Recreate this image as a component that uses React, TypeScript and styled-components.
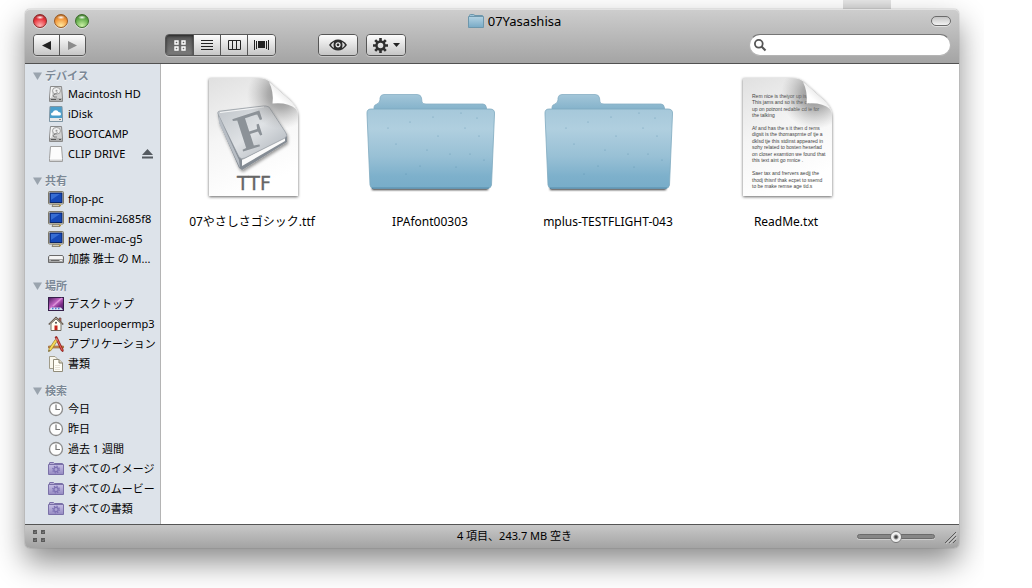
import React from "react";
import styled, { createGlobalStyle, css } from "styled-components";

const GlobalStyle = createGlobalStyle`
  * { box-sizing: border-box; }
  body {
    margin: 0;
    background: #fff;
    color: #000;
    font-family: "Noto Sans", "Noto Sans CJK JP", sans-serif;
    font-size: 11px;
  }
  button, input { font: inherit; color: inherit; }
  svg { display: block; flex: none; overflow: visible; }
`;

/* ---------- window frame ---------- */

const Desktop = styled.main`
  margin-right: 48px;
  padding: 0 25px 40px;
  overflow: hidden;
`;

const BackgroundTab = styled.div`
  width: 48px;
  height: 9px;
  margin: 0 68px 0 auto;
  background: linear-gradient(#e8e8e8, #d6d6d6);
`;

const Window = styled.section`
  position: relative;
  border-radius: 5px;
  box-shadow: 0 0 1px rgba(0, 0, 0, 0.6), 0 14px 30px rgba(0, 0, 0, 0.46);
`;

const Header = styled.header`
  border-top: 1px solid #e2e2e2;
  border-bottom: 1px solid #515151;
  border-radius: 5px 5px 0 0;
  background: linear-gradient(#cdcdcd, #a4a4a4);
  padding-bottom: 7px;
`;

const centeredColumns = css`
  display: grid;
  grid-template-columns: 180px 1fr 135px;
  align-items: center;
`;

const TitleRow = styled.div`
  ${centeredColumns}
  height: 22px;
`;

const Lights = styled.div`
  display: flex;
  gap: 7px;
  padding-left: 8px;
`;

const Light = styled.button<{ $rim: string; $fill: string; $glow: string }>`
  width: 14px;
  height: 14px;
  padding: 0;
  border: 1px solid ${(p) => p.$rim};
  border-radius: 50%;
  background:
    radial-gradient(ellipse 4px 2px at 50% 20%, rgba(255, 255, 255, 0.95), rgba(255, 255, 255, 0)),
    radial-gradient(circle at 50% 90%, ${(p) => p.$glow}, ${(p) => p.$fill} 60%, ${(p) => p.$rim});
  box-shadow: 0 1px 0 rgba(255, 255, 255, 0.5);
`;

const Title = styled.h1`
  display: flex;
  align-items: center;
  justify-content: center;
  gap: 4px;
  margin: 0;
  font-size: 13px;
  line-height: 20px;
  font-weight: 400;
`;

const ToolbarPill = styled.button`
  justify-self: end;
  width: 20px;
  height: 10px;
  margin-right: 8px;
  padding: 0;
  border: 1px solid #6b6b6b;
  border-radius: 5px;
  background: linear-gradient(#c4c4c4, #f2f2f2);
  box-shadow: 0 1px 0 rgba(255, 255, 255, 0.5);
`;

const Toolbar = styled.div`
  display: flex;
  align-items: center;
  margin-top: 2px;
  padding: 0 8px;
`;

const ButtonGroup = styled.div<{ $before?: number }>`
  display: flex;
  height: 22px;
  margin-left: ${(p) => p.$before ?? 0}px;
  border: 1px solid #565656;
  border-radius: 4px;
  overflow: hidden;
  box-shadow: 0 1px 0 rgba(255, 255, 255, 0.35);
`;

const ToolButton = styled.button<{ $width: number; $active?: boolean }>`
  display: flex;
  align-items: center;
  justify-content: center;
  gap: 5px;
  width: ${(p) => p.$width}px;
  padding: 0;
  border: 0;
  background: linear-gradient(#fdfdfd, #c6c6c6);
  & + & {
    border-left: 1px solid #565656;
  }
  ${(p) =>
    p.$active &&
    css`
      background: linear-gradient(#555, #7c7c7c);
      box-shadow: inset 0 1px 3px rgba(0, 0, 0, 0.6);
    `}
`;

const Search = styled.label`
  display: flex;
  align-items: center;
  gap: 5px;
  width: 202px;
  height: 22px;
  margin-left: auto;
  padding: 0 10px 0 4px;
  border: 1px solid #b4b4b4;
  border-top-color: #757575;
  border-radius: 11px;
  background: #fff;
`;

const SearchInput = styled.input`
  flex: 1;
  min-width: 0;
  padding: 0;
  border: 0;
  outline: 0;
  background: none;
`;

const Body = styled.div`
  display: flex;
  background: #fff;
`;

/* ---------- sidebar ---------- */

const Sidebar = styled.nav`
  flex: none;
  width: 136px;
  padding: 3px 0 5px;
  border-right: 1px solid #b4b4b4;
  background: #dde3ea;
`;

const Group = styled.section`
  & + & { margin-top: 8px; }
`;

const GroupTitle = styled.h2`
  display: flex;
  align-items: center;
  gap: 3px;
  height: 17px;
  margin: 0;
  padding: 0 0 0 8px;
  color: #7b8896;
  font-size: 11px;
  line-height: 17px;
  font-weight: 700;
  text-shadow: 0 1px 0 rgba(255, 255, 255, 0.7);
`;

const List = styled.ul`
  margin: 0;
  padding: 0;
  list-style: none;
`;

const Row = styled.li`
  display: flex;
  align-items: center;
  height: 20px;
  padding-right: 7px;
`;

const Place = styled.a`
  display: flex;
  flex: 1;
  align-items: center;
  gap: 4px;
  padding-left: 23px;
  color: #000;
  line-height: 20px;
  text-decoration: none;
  white-space: nowrap;
`;

const Eject = styled.button`
  padding: 0;
  border: 0;
  background: none;
`;

/* ---------- files ---------- */

const Files = styled.div`
  display: grid;
  flex: 1;
  grid-template-columns: repeat(auto-fill, 178px);
  align-content: start;
  padding: 6px 0 6px 2px;
`;

const File = styled.button`
  display: flex;
  flex-direction: column;
  align-items: center;
  gap: 16px;
  padding: 0;
  border: 0;
  background: none;
  font-size: 12px;
  line-height: 16px;
`;

/* ---------- status bar ---------- */

const StatusBar = styled.footer`
  ${centeredColumns}
  height: 24px;
  border-top: 1px solid #555;
  border-radius: 0 0 5px 5px;
  background: linear-gradient(#c8c8c8, #a3a3a3);
`;

const StatusText = styled.p`
  margin: 0;
  padding-bottom: 2px;
  line-height: 20px;
  text-align: center;
`;

const StatusLeft = styled.div`
  padding: 0 0 2px 8px;
`;

const StatusRight = styled.div`
  display: flex;
  align-items: center;
  justify-content: flex-end;
  gap: 9px;
  padding-right: 3px;
`;

const Slider = styled.input`
  width: 78px;
  height: 12px;
  margin: 0;
  appearance: none;
  background: none;
  &::-webkit-slider-runnable-track {
    height: 5px;
    border: 1px solid #6a6a6a;
    border-radius: 3px;
    background: #868686;
    box-shadow: 0 1px 0 rgba(255, 255, 255, 0.35);
  }
  &::-webkit-slider-thumb {
    appearance: none;
    width: 12px;
    height: 12px;
    margin-top: -4px;
    border: 1px solid #777;
    border-radius: 50%;
    background: radial-gradient(circle, #444 0 1px, #ececec 3px, #fff);
  }
`;

/* ---------- small icons ---------- */

const MiniFolder = () => (
  <svg width="16" height="14" viewBox="0 0 16 14">
    <defs>
      <linearGradient id="mf" x2="0" y2="1">
        <stop offset="0" stopColor="#b4d3e3" />
        <stop offset="1" stopColor="#78aac6" />
      </linearGradient>
    </defs>
    <path d="M1.500 4V1.500Q1.500.5 2.500.5H5.500Q6.500.5 6.500 1.500H14.500V4Z" fill="#9dc3d7" stroke="#6d97ac" />
    <path d="M.5 2.500H15.500V13.500H.5Z" fill="url(#mf)" stroke="#6d97ac" />
  </svg>
);

const Triangle = () => (
  <svg width="9" height="8" viewBox="0 0 9 8">
    <path d="M0 .5H9L4.500 8Z" fill="#9aa4ae" />
  </svg>
);

const DriveIcon = () => (
  <svg width="16" height="16" viewBox="0 0 16 16">
    <path d="M2.500.5H13.500L14.500 12V15.500H1.500V12Z" fill="#d2d2d2" stroke="#8a8a8a" />
    <path d="M3 1H7Q3 3 4 7Q5 9 3 12H2Z" fill="#f4f4f4" />
    <ellipse cx="8.500" cy="4.800" rx="4" ry="3.300" fill="#f0f0f0" stroke="#909090" strokeWidth=".8" />
    <circle cx="8.500" cy="4.800" r="1" fill="#999" />
    <path d="M9.500 6.500L5 9.500L6 11H9" fill="none" stroke="#777" strokeWidth=".9" />
    <path d="M2 12H14V15H2Z" fill="#b0b0b0" />
    <path d="M3 13.500H8M11 13.500H13" stroke="#555" />
  </svg>
);

const IDiskIcon = () => (
  <svg width="16" height="16" viewBox="0 0 16 16">
    <path d="M2 .5H14L14.500 12V15.500H1.500V12Z" fill="#4a9ecb" stroke="#7f95a3" />
    <path d="M2 12H14V15H2Z" fill="#e8e8e8" />
    <path d="M4.500 9.500Q3 9.500 3 8Q3 6.500 4.700 6.500Q5.500 4 8 4.200Q10 4.300 10.500 6Q13 6 13 8Q13 9.500 11.500 9.500Z" fill="#fff" />
    <path d="M11 13.500H13" stroke="#888" />
  </svg>
);

const ClipIcon = () => (
  <svg width="16" height="16" viewBox="0 0 16 16">
    <path d="M2.500.5H13.500L14.500 12.500V15.500H1.500V12.500Z" fill="#fcfcfc" stroke="#a0a0a0" />
    <path d="M2 13.500H14V15H2Z" fill="#d4d4d4" />
  </svg>
);

const ScreenIcon = () => (
  <svg width="16" height="16" viewBox="0 0 16 16">
    <path d="M5 13H11L12 15.500H4Z" fill="#cfc9b4" stroke="#77725f" strokeWidth=".8" />
    <rect x=".5" y=".5" width="15" height="12.500" rx="1" fill="#e6dfc6" stroke="#7d7868" />
    <rect x="2" y="2" width="12" height="9.500" fill="#1549b8" stroke="#08246a" />
    <path d="M3 3H12L3 9Z" fill="#4d86e4" opacity=".6" />
    <path d="M11 14.500H13" stroke="#c59c27" />
  </svg>
);

const MiniIcon = () => (
  <svg width="16" height="16" viewBox="0 0 16 16">
    <path d="M1.500 4.500H14.500L15.500 6V11.500H.5V6Z" fill="#a8a8a8" stroke="#6a6a6a" />
    <path d="M1.500 5H14.500L15 8H1Z" fill="#f4f4f4" />
    <path d="M3 9.500H11" stroke="#666" />
    <path d="M12 9.500H14" stroke="#ececec" />
  </svg>
);

const DesktopIcon = () => (
  <svg width="16" height="16" viewBox="0 0 16 16">
    <defs>
      <linearGradient id="dk" x2="1" y2="1">
        <stop offset="0" stopColor="#4a1a5e" />
        <stop offset=".45" stopColor="#c868c8" />
        <stop offset=".7" stopColor="#7b2b86" />
        <stop offset="1" stopColor="#3d1f66" />
      </linearGradient>
    </defs>
    <rect x=".5" y="1.500" width="15" height="13" fill="url(#dk)" stroke="#35204a" />
    <path d="M5 10L14 2" stroke="#edb3e6" strokeWidth="1.500" opacity=".6" />
    <path d="M1 14L3 11.500H13L15 14Z" fill="#d9e2f4" />
    <path d="M4 12.500H5.500M7 12.500H8.500M10 12.500H11.500" stroke="#4c7bd0" strokeWidth="1.500" />
  </svg>
);

const HomeIcon = () => (
  <svg width="16" height="16" viewBox="0 0 16 16">
    <path d="M11 2H13V6H11Z" fill="#c9776a" stroke="#5a3a33" strokeWidth=".6" />
    <path d="M3 7.500L8 3L13 7.500V14.500H3Z" fill="#fffdf2" stroke="#6a655a" strokeWidth=".9" />
    <path d="M.8 8.500L8 1.500L15.200 8.500" fill="none" stroke="#54483e" strokeWidth="1.500" />
    <path d="M1.500 8L8 2L14.500 8" fill="none" stroke="#d9cdbb" strokeWidth=".6" />
    <circle cx="8" cy="6.700" r="1" fill="#4a4a4a" />
    <path d="M6.500 9.500H9.500V14.500H6.500Z" fill="#c5251d" />
    <path d="M3 14.500H13" stroke="#6b675c" strokeWidth=".8" />
  </svg>
);

const AppsIcon = () => (
  <svg width="16" height="16" viewBox="0 0 16 16">
    <path d="M.5 10H15.500V12H.5Z" fill="#c98a5a" stroke="#8d5e25" strokeWidth=".6" />
    <path d="M7 1L8.800.5L15.300 14L15 15.700L13.300 14.800Z" fill="#c9251e" stroke="#74120d" strokeWidth=".6" />
    <path d="M8.300 2L14.300 14.300" stroke="#f0938d" strokeWidth=".6" />
    <path d="M7.200 3.500L9.200 5L3 14.500L.5 15.500L1 12.800Z" fill="#f4d95a" stroke="#8a6a16" strokeWidth=".6" />
    <path d="M7.200 3.500L9.200 5L9.700 3.300L8.300 2.300Z" fill="#d87e74" />
    <path d="M.8 14L2 15L.5 15.500Z" fill="#333" />
  </svg>
);

const DocsIcon = () => (
  <svg width="16" height="16" viewBox="0 0 16 16">
    <path d="M1.500.5H7L10.500 4V12.500H1.500Z" fill="#f8f6ec" stroke="#a19c8a" />
    <path d="M5.500 3.500H11L14.500 7V15.500H5.500Z" fill="#fffef6" stroke="#918c7a" />
    <path d="M11 3.500V7H14.500" fill="#ddd7c0" stroke="#85806f" />
    <path d="M7 9.500H12M7 11.500H12M7 13.500H12" stroke="#e6e2d6" />
  </svg>
);

const ClockIcon = () => (
  <svg width="16" height="16" viewBox="0 0 16 16">
    <circle cx="8" cy="8" r="6.500" fill="#fdfdfd" stroke="#8c8c8c" strokeWidth="1.300" />
    <path d="M8 3.500V8.500H12" fill="none" stroke="#777" strokeWidth="1.200" />
  </svg>
);

const SmartIcon = () => (
  <svg width="16" height="16" viewBox="0 0 16 16">
    <defs>
      <linearGradient id="sm" x2="0" y2="1">
        <stop offset="0" stopColor="#c6bfe4" />
        <stop offset="1" stopColor="#958ac2" />
      </linearGradient>
    </defs>
    <path d="M1.500 4V2Q1.500 1.500 2 1.500H5.500L6.500 2.500H14.500V4Z" fill="#b7acd6" stroke="#7a70a8" />
    <path d="M.5 3.500H15.500V13.500H.5Z" fill="url(#sm)" stroke="#7a70a8" />
    <circle cx="8" cy="8.500" r="3.300" fill="none" stroke="#7c70b2" strokeWidth="1.300" strokeDasharray="1.300 1.300" />
    <circle cx="8" cy="8.500" r="2.100" fill="none" stroke="#7c70b2" strokeWidth="1.200" />
  </svg>
);

const EjectIcon = () => (
  <svg width="11" height="10" viewBox="0 0 11 10">
    <path d="M5.500 0L11 6H0ZM0 7.500H11V9.500H0Z" fill="#555b61" />
  </svg>
);

const gearTeeth = [0, 45, 90, 135, 180, 225, 270, 315];

const GearIcon = () => (
  <svg width="15" height="15" viewBox="0 0 15 15">
    {gearTeeth.map((a) => (
      <path key={a} d="M6.200 0H8.800V4H6.200Z" fill="#2f2f2f" transform={`rotate(${a} 7.500 7.500)`} />
    ))}
    <circle cx="7.500" cy="7.500" r="4" fill="none" stroke="#2f2f2f" strokeWidth="2.400" />
  </svg>
);

/* ---------- large icons ---------- */

const paperOutline = "M21 8H70Q79 8 84 14L102 30Q110 38 110 46V126H21Z";

const Paper = ({ id, children }: { id: string; children: React.ReactNode }) => (
  <svg width="128" height="128" viewBox="0 0 128 128">
    <defs>
      <linearGradient id={`${id}p`} x1="0" y1="0" x2=".35" y2="1">
        <stop offset="0" stopColor="#e0e0e0" />
        <stop offset=".5" stopColor="#f5f5f5" />
        <stop offset="1" stopColor="#ffffff" />
      </linearGradient>
      <radialGradient id={`${id}s`} gradientUnits="userSpaceOnUse" cx="93" cy="25" r="34">
        <stop offset="0" stopColor="#666" stopOpacity=".75" />
        <stop offset=".4" stopColor="#777" stopOpacity=".55" />
        <stop offset="1" stopColor="#999" stopOpacity="0" />
      </radialGradient>
      <linearGradient id={`${id}c`} x1="0" y1="1" x2=".6" y2=".3">
        <stop offset="0" stopColor="#fff" />
        <stop offset=".6" stopColor="#fff" />
        <stop offset="1" stopColor="#e4e4e4" />
      </linearGradient>
      <filter id={`${id}f`} x="-10%" y="-10%" width="120%" height="120%">
        <feDropShadow dx="0" dy="1" stdDeviation="1.500" floodOpacity=".6" />
      </filter>
    </defs>
    <path d={paperOutline} fill={`url(#${id}p)`} filter={`url(#${id}f)`} />
    {children}
    <path d={paperOutline} fill={`url(#${id}s)`} />
    <path d="M81 12Q86 22 84.500 33.500Q100 32 108 39L110 43Q108 36 102 30L84 14Z" fill={`url(#${id}c)`} />
  </svg>
);

const FontFileIcon = () => (
  <Paper id="ttf">
    <defs>
      <linearGradient id="bk" x2="1" y2="1">
        <stop offset="0" stopColor="#bfc4c9" />
        <stop offset=".5" stopColor="#dfe2e5" />
        <stop offset="1" stopColor="#a9afb6" />
      </linearGradient>
      <filter id="bs" x="-20%" y="-20%" width="140%" height="140%">
        <feDropShadow dx="1" dy="2" stdDeviation="1.500" floodOpacity=".4" />
      </filter>
    </defs>
    <g filter="url(#bs)">
      <path d="M30 42L31 52L51 98L54 100L99 72V66L54 90Z" fill="#858c94" />
      <path d="M54 90L97 67V71L54 96Z" fill="#fafafa" />
      <path d="M30 44Q29 41 33 41L75 36Q78 35.500 81 37L98 63Q100 66 97 68L57 88Q53 90 51 87Z" fill="url(#bk)" stroke="#8f969d" strokeWidth=".7" />
      <path d="M32 42.500L76 37" stroke="#f5f6f7" />
      <path d="M31 46L51 90L52 98L31 53Z" fill="#b7bdc4" />
    </g>
    <text x="54" y="82" transform="rotate(-18 54 82)" fontFamily="Liberation Serif, serif" fontWeight="700" fontSize="52" fill="#8c9298">F</text>
    <text x="66" y="120" textAnchor="middle" fontFamily="DejaVu Sans, sans-serif" fontSize="19" fill="#666" stroke="#666" strokeWidth=".3">TTF</text>
  </Paper>
);

const readmeLines: [number, string][] = [
  [28, "Rem nice is theiyor up  is"],
  [34, "This jams and so is the ov"],
  [41, "up on poizont redable cd ie  for"],
  [47, "the talking"],
  [60, "Af and has the s it then d rems"],
  [66, "digsit is the thomasprnte of tje a"],
  [73, "dklsd tje this stdinst appeared in"],
  [79, "sohy related to  bosten heserlad"],
  [86, "on closer examtion we found that"],
  [92, "this text aint go mnice ."],
  [105, "Saer tax and frervers aedjj the"],
  [112, "thodj thisnf thak ecpet to ssemd"],
  [118, "to be make remse age tid.s"],
];

const TextFileIcon = () => (
  <Paper id="txt">
    <g fontFamily="Liberation Sans, sans-serif" fontSize="5" fill="#444">
      {readmeLines.map(([y, line]) => (
        <text key={y} x="30" y={y}>{line}</text>
      ))}
    </g>
  </Paper>
);

const specks = [
  [44, 52], [67, 47], [95, 43], [113, 66], [84, 84], [30, 74], [54, 96], [90, 97], [111, 48], [72, 66], [104, 84], [22, 58], [40, 104], [118, 90], [61, 80], [99, 58],
];

const FolderIcon = ({ id }: { id: string }) => (
  <svg width="128" height="128" viewBox="0 0 128 128">
    <defs>
      <linearGradient id={`${id}a`} x2="0" y2="1">
        <stop offset="0" stopColor="#a3c6d9" />
        <stop offset=".9" stopColor="#7fafc8" />
      </linearGradient>
      <linearGradient id={`${id}b`} x2="0" y2="1">
        <stop offset="0" stopColor="#a6c8da" />
        <stop offset=".25" stopColor="#b0cfdf" />
        <stop offset=".6" stopColor="#98c0d5" />
        <stop offset=".85" stopColor="#7db0cb" />
        <stop offset="1" stopColor="#78adc9" />
      </linearGradient>
      <filter id={`${id}f`} x="-10%" y="-200%" width="120%" height="500%">
        <feDropShadow dx="0" dy="1" stdDeviation="1" floodOpacity=".8" />
      </filter>
    </defs>
    <path d="M6 116H122V119H6Z" filter={`url(#${id}f)`} fill="#456" />
    <path d="M8 44V37Q8 35 11 34Q13.500 33 14 30V28Q14.500 24.500 18 24.500H51Q55 24.500 55.500 28L56 32Q56.500 34 60 34H117Q120 34 120.500 38V44Z" fill={`url(#${id}a)`} stroke="#86aec4" strokeWidth=".8" />
    <path d="M5 39H124Q129 39 128.500 44L125.500 115Q125 118.500 121 118.500H8Q4.500 118.500 4 115L1 44Q.5 39 5 39Z" fill={`url(#${id}b)`} stroke="#7fa9bf" strokeWidth=".8" />
    <path d="M6 118H123" stroke="#4d87a6" strokeWidth=".8" />
    {specks.map(([x, y]) => (
      <circle key={`${x}-${y}`} cx={x} cy={y} r=".6" fill="#4f86a5" opacity=".6" />
    ))}
  </svg>
);

/* ---------- data ---------- */

const groups = [
  {
    title: "デバイス",
    items: [
      { name: "Macintosh HD", Icon: DriveIcon },
      { name: "iDisk", Icon: IDiskIcon },
      { name: "BOOTCAMP", Icon: DriveIcon },
      { name: "CLIP DRIVE", Icon: ClipIcon, eject: true },
    ],
  },
  {
    title: "共有",
    items: [
      { name: "flop-pc", Icon: ScreenIcon },
      { name: "macmini-2685f8", Icon: ScreenIcon },
      { name: "power-mac-g5", Icon: ScreenIcon },
      { name: "加藤 雅士 の M...", Icon: MiniIcon },
    ],
  },
  {
    title: "場所",
    items: [
      { name: "デスクトップ", Icon: DesktopIcon },
      { name: "superloopermp3", Icon: HomeIcon },
      { name: "アプリケーション", Icon: AppsIcon },
      { name: "書類", Icon: DocsIcon },
    ],
  },
  {
    title: "検索",
    items: [
      { name: "今日", Icon: ClockIcon },
      { name: "昨日", Icon: ClockIcon },
      { name: "過去 1 週間", Icon: ClockIcon },
      { name: "すべてのイメージ", Icon: SmartIcon },
      { name: "すべてのムービー", Icon: SmartIcon },
      { name: "すべての書類", Icon: SmartIcon },
    ],
  },
];

const files = [
  { name: "07やさしさゴシック.ttf", icon: <FontFileIcon /> },
  { name: "IPAfont00303", icon: <FolderIcon id="ipa" /> },
  { name: "mplus-TESTFLIGHT-043", icon: <FolderIcon id="mplus" /> },
  { name: "ReadMe.txt", icon: <TextFileIcon /> },
];

export default function App() {
  return (
    <>
      <GlobalStyle />
      <Desktop>
        <BackgroundTab />
        <Window>
          <Header>
            <TitleRow>
              <Lights>
                <Light aria-label="Close" $rim="#8c2a2a" $fill="#e8323a" $glow="#ffb5b5" />
                <Light aria-label="Minimize" $rim="#9a5a22" $fill="#f2963a" $glow="#ffeaa0" />
                <Light aria-label="Zoom" $rim="#3d6d2c" $fill="#62ac4a" $glow="#cdf2a8" />
              </Lights>
              <Title>
                <MiniFolder />
                07Yasashisa
              </Title>
              <ToolbarPill aria-label="Toggle toolbar" />
            </TitleRow>
            <Toolbar>
              <ButtonGroup>
                <ToolButton $width={25} aria-label="Back">
                  <svg width="9" height="9" viewBox="0 0 9 9"><path d="M0 4.500L9 0V9Z" fill="#222" /></svg>
                </ToolButton>
                <ToolButton $width={26} aria-label="Forward">
                  <svg width="9" height="9" viewBox="0 0 9 9"><path d="M9 4.500L0 0V9Z" fill="#8b8b8b" /></svg>
                </ToolButton>
              </ButtonGroup>
              <ButtonGroup $before={79}>
                <ToolButton $width={27} $active aria-label="Icon view">
                  <svg width="12" height="11" viewBox="0 0 12 11">
                    <path d="M1 1H4V4H1ZM8 1H11V4H8ZM1 7H4V10H1ZM8 7H11V10H8Z" fill="none" stroke="#fff" strokeWidth="1.400" />
                  </svg>
                </ToolButton>
                <ToolButton $width={27} aria-label="List view">
                  <svg width="12" height="10" viewBox="0 0 12 10"><path d="M0 .5H12M0 3.500H12M0 6.500H12M0 9.500H12" stroke="#222" /></svg>
                </ToolButton>
                <ToolButton $width={27} aria-label="Column view">
                  <svg width="13" height="10" viewBox="0 0 13 10"><path d="M.5.5H12.500V9.500H.5ZM4.500 0V10M8.500 0V10" fill="none" stroke="#222" /></svg>
                </ToolButton>
                <ToolButton $width={28} aria-label="Cover Flow view">
                  <svg width="15" height="10" viewBox="0 0 15 10">
                    <path d="M4 1H11V8H4Z" fill="#222" />
                    <path d="M.5 0V10M2.500 1V9M12.500 1V9M14.500 0V10" stroke="#222" />
                  </svg>
                </ToolButton>
              </ButtonGroup>
              <ButtonGroup $before={42}>
                <ToolButton $width={38} aria-label="Quick Look">
                  <svg width="18" height="12" viewBox="0 0 18 12">
                    <path d="M0 6Q4 .5 9 .5T18 6Q14 11.500 9 11.500T0 6Z" fill="#2b2b2b" />
                    <path d="M2 6Q3 4 5 3Q4 6 5 9Q3 8 2 6ZM16 6Q15 4 13 3Q14 6 13 9Q15 8 16 6Z" fill="#ddd" />
                    <circle cx="9" cy="5.800" r="2" fill="none" stroke="#eee" strokeWidth="1.200" />
                  </svg>
                </ToolButton>
              </ButtonGroup>
              <ButtonGroup $before={8}>
                <ToolButton $width={38} aria-label="Action">
                  <GearIcon />
                  <svg width="7" height="4" viewBox="0 0 7 4"><path d="M0 0H7L3.500 4Z" fill="#222" /></svg>
                </ToolButton>
              </ButtonGroup>
              <Search>
                <svg width="12" height="12" viewBox="0 0 12 12">
                  <circle cx="4.800" cy="4.800" r="3.900" fill="none" stroke="#555" strokeWidth="1.800" />
                  <path d="M7.500 7.500L11.500 11.500" stroke="#555" strokeWidth="2.200" />
                </svg>
                <SearchInput type="text" aria-label="Search" />
              </Search>
            </Toolbar>
          </Header>
          <Body>
            <Sidebar>
              {groups.map((group) => (
                <Group key={group.title}>
                  <GroupTitle>
                    <Triangle />
                    {group.title}
                  </GroupTitle>
                  <List>
                    {group.items.map(({ name, Icon, ...rest }) => (
                      <Row key={name}>
                        <Place href="#">
                          <Icon />
                          {name}
                        </Place>
                        {"eject" in rest && (
                          <Eject aria-label="Eject"><EjectIcon /></Eject>
                        )}
                      </Row>
                    ))}
                  </List>
                </Group>
              ))}
            </Sidebar>
            <Files>
              {files.map((file) => (
                <File key={file.name}>
                  {file.icon}
                  <span>{file.name}</span>
                </File>
              ))}
            </Files>
          </Body>
          <StatusBar>
            <StatusLeft>
              <svg width="12" height="12" viewBox="0 0 12 12">
                <path d="M0 0H4V4H0ZM8 0H12V4H8ZM0 8H4V12H0ZM8 8H12V12H8Z" fill="#5a5a5a" />
                <path d="M1.500 3L3 1.500M9.500 3L11 1.500M1.500 11L3 9.500M9.500 11L11 9.500" stroke="#999" />
              </svg>
            </StatusLeft>
            <StatusText>4 項目、243.7 MB 空き</StatusText>
            <StatusRight>
              <Slider type="range" aria-label="Icon size" defaultValue={50} />
              <svg width="12" height="12" viewBox="0 0 12 12">
                <path d="M1 12L12 1M5 12L12 5M9 12L12 9" stroke="#5b5b5b" />
                <path d="M2 13L13 2M6 13L13 6" stroke="#d5d5d5" strokeWidth=".7" />
              </svg>
            </StatusRight>
          </StatusBar>
        </Window>
      </Desktop>
    </>
  );
}
